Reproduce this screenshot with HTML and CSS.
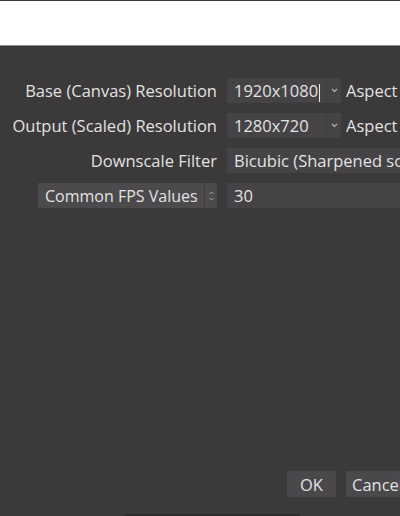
FILE: index.html
```html
<!DOCTYPE html>
<html>
<head>
<meta charset="utf-8">
<link rel="stylesheet" href="styles.css">
</head>
<body>
<div class="topbar"></div>
<div class="dialog">
  <div class="form">
    <div class="label">Base (Canvas) Resolution</div>
    <div class="fieldrow">
      <div class="combo small"><span class="value">1920x1080<span class="caret"></span></span><span class="arrow"><svg width="7" height="5" viewBox="0 0 7 5"><path d="M1 1 L3.5 3.5 L6 1" fill="none" stroke="#b4b4b4" stroke-width="1.2"/></svg></span></div>
      <span class="aspect">Aspect</span>
    </div>
    <div class="label">Output (Scaled) Resolution</div>
    <div class="fieldrow">
      <div class="combo small"><span class="value">1280x720</span><span class="arrow"><svg width="7" height="5" viewBox="0 0 7 5"><path d="M1 1 L3.5 3.5 L6 1" fill="none" stroke="#b4b4b4" stroke-width="1.2"/></svg></span></div>
      <span class="aspect">Aspect</span>
    </div>
    <div class="label">Downscale Filter</div>
    <div class="fieldrow">
      <div class="combo wide"><span class="value">Bicubic (Sharpened scaling, 16 samples)</span></div>
    </div>
    <div class="label-combo-wrap">
      <div class="label-combo"><span class="lc-text">Common FPS Values</span><span class="spin"><svg width="7" height="12" viewBox="0 0 7 12"><path d="M1.5 4 L3.5 2 L5.5 4" fill="none" stroke="#a8a8a8" stroke-width="1"/><path d="M1.5 8 L3.5 10 L5.5 8" fill="none" stroke="#a8a8a8" stroke-width="1"/></svg></span></div>
    </div>
    <div class="fieldrow">
      <div class="combo wide"><span class="value">30</span></div>
    </div>
  </div>
  <div class="buttons">
    <button class="btn ok">OK</button>
    <button class="btn cancel">Cancel</button>
  </div>
  <div class="footer"><div class="strip"></div></div>
</div>
</body>
</html>
```
FILE: styles.css
```css
html, body {
  margin: 0;
  padding: 0;
  width: 400px;
  height: 516px;
  overflow: hidden;
}
body {
  font-family: "Open Sans", "Noto Sans", sans-serif;
  font-size: 16.5px;
  color: #e2e2e2;
  background: #3b393a;
  display: flex;
  flex-direction: column;
}
.topbar {
  height: 44px;
  background: #ffffff;
  border-top: 1px solid #3a3a3a;
  border-bottom: 1px solid #8c8c8c;
  flex: none;
}
.dialog {
  flex: 1;
  display: flex;
  flex-direction: column;
  background: #3b393a;
  min-height: 0;
}
.form {
  display: grid;
  grid-template-columns: 217px 173px;
  column-gap: 10px;
  row-gap: 10px;
  padding-top: 32px;
}
.label {
  text-align: right;
  height: 25px;
  line-height: 25px;
  white-space: nowrap;
}
.fieldrow {
  display: flex;
  align-items: center;
  gap: 5px;
  height: 25px;
  white-space: nowrap;
  overflow: hidden;
}
.combo {
  height: 25px;
  background: #454345;
  display: flex;
  align-items: center;
  box-sizing: border-box;
  overflow: hidden;
}
.combo .value {
  padding-left: 7px;
  white-space: nowrap;
}
.combo.small {
  width: 114px;
  flex: none;
}
.combo.small .value {
  flex: 1;
}
.combo.wide {
  width: 200px;
  flex: none;
}
.caret {
  display: inline-block;
  width: 1px;
  height: 18px;
  background: #e8e8e8;
  vertical-align: middle;
  margin-left: 1px;
}
.arrow {
  width: 14px;
  height: 25px;
  border-left: 1px solid #3e3c3e;
  display: flex;
  align-items: center;
  justify-content: center;
  flex: none;
}
.label-combo-wrap {
  display: flex;
  justify-content: flex-end;
}
.label-combo {
  width: 179px;
  height: 25px;
  background: #4c4a4c;
  display: flex;
  align-items: center;
  justify-content: space-between;
  padding-left: 7px;
  box-sizing: border-box;
  white-space: nowrap;
}
.lc-text {
  font-size: 16px;
}
.spin {
  width: 12px;
  height: 25px;
  border-left: 1px solid #403e40;
  display: flex;
  align-items: center;
  justify-content: center;
  flex: none;
}
.buttons {
  margin-top: auto;
  display: flex;
  gap: 10px;
  padding-left: 287px;
  padding-bottom: 17px;
}
.btn {
  font-family: "Open Sans", "Noto Sans", sans-serif;
  font-size: 16.5px;
  color: #e2e2e2;
  background: #4a484a;
  border: none;
  height: 26px;
  padding: 0;
  flex: none;
}
.btn.ok {
  width: 49px;
}
.btn.cancel {
  width: 80px;
  text-align: left;
  padding-left: 6px;
}
.footer {
  height: 2px;
  display: flex;
  padding-left: 125px;
}
.strip {
  width: 175px;
  height: 2px;
  background: #2e2c2d;
}
```
